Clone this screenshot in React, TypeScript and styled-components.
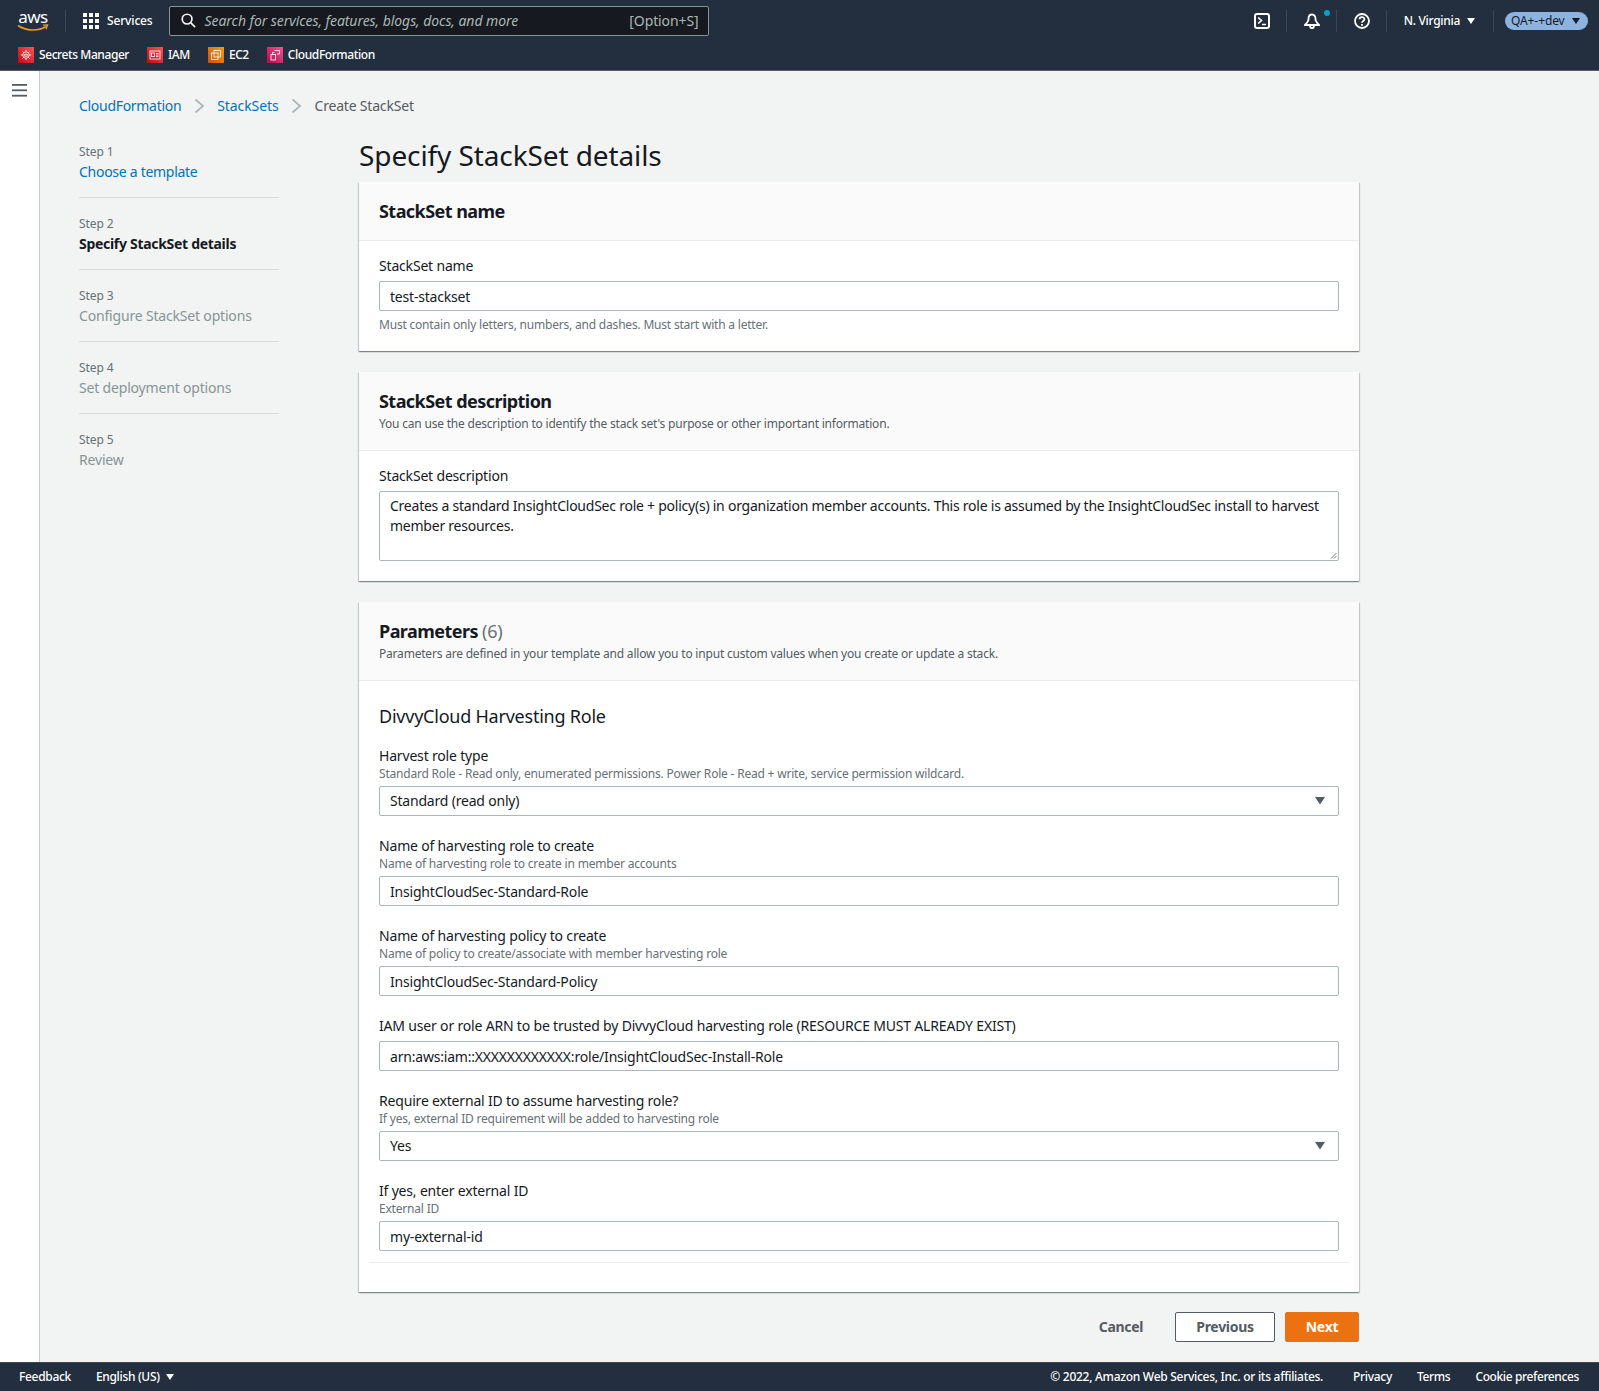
import React from "react";
import styled, { createGlobalStyle } from "styled-components";

const Global = createGlobalStyle`
  html, body { margin: 0; padding: 0; background: #f2f3f3; }
  * { box-sizing: border-box; }
  body { font-family: "Noto Sans", "Open Sans", Arial, sans-serif; color: #16191f; font-size: 14px; line-height: 20px; }
`;

const Page = styled.div`
  width: 1599px; height: 1391px; display: flex; flex-direction: column; overflow: hidden;
`;
const Nav = styled.header`
  height: 71px; background: #232f3e; border-bottom: 1px solid #545b64; flex: none; color: #fff;
`;
const TopRow = styled.div`
  height: 41px; display: flex; align-items: center; padding-left: 17px;
`;
const Logo = styled.div`
  width: 32px; height: 24px; position: relative; flex: none; color: #fff; font-size: 17px; line-height: 17px; font-weight: 400; letter-spacing: -0.5px; text-align: center; margin-top: -1px; margin-right: 16px;
  svg { position: absolute; left: 0; top: 16px; }
`;
const NavSep = styled.span`
  width: 1px; height: 22px; background: #414750; flex: none;
`;
const ServicesBtn = styled.div`
  display: flex; align-items: center; gap: 8px; margin-left: 17px; font-size: 12px; font-weight: 500; letter-spacing: -0.15px;
  margin-right: 16px;
`;
const SearchBox = styled.div`
  width: 540px; height: 30px; background: #16191f; border: 1px solid #879596; border-radius: 2px; display: flex; align-items: center; padding: 0 9px 0 11px; color: #aab7b8; font-size: 14px; flex: none;
`;
const SearchText = styled.span`
  font-style: italic; margin-left: 9px; flex: 1; letter-spacing: -0.06px;
`;
const Shortcut = styled.span`
  letter-spacing: -0.1px;
`;
const Utilities = styled.div`
  margin-left: auto; display: flex; align-items: center; padding-right: 11px;
`;
const IconCell = styled.span<{ $ml: number; $mr: number }>`
  position: relative; display: flex; margin: 0 ${(p) => p.$mr}px 0 ${(p) => p.$ml}px; width: 16px; height: 16px;
`;
const Dot = styled.span`
  position: absolute; width: 6px; height: 6px; border-radius: 50%; background: #00a1c9; left: 20px; top: -3px;
`;
const Region = styled.span`
  display: flex; align-items: center; gap: 7px; margin: 0 18px 0 17px; font-size: 12px; font-weight: 500; letter-spacing: -0.3px;
`;
const Pill = styled.span`
  display: flex; align-items: center; justify-content: space-between; width: 83px; height: 18px; margin-left: 11px; padding: 0 8px 0 6px; border-radius: 9px; background: #8db4e0; color: #16191f; font-size: 12px; letter-spacing: -0.1px;
`;
const FavRow = styled.div`
  height: 29px; display: flex; align-items: center; padding-left: 18px; gap: 18px; margin-top: -1px;
`;
const Fav = styled.span`
  display: flex; align-items: center; gap: 5px; font-size: 12px; font-weight: 500; letter-spacing: -0.42px;
`;
const FavIcon = styled.span<{ $from: string; $to: string }>`
  width: 16px; height: 16px; display: flex; align-items: center; justify-content: center; background: linear-gradient(45deg, ${(p) => p.$from}, ${(p) => p.$to}); flex: none;
`;
const Middle = styled.div`
  flex: 1; display: flex; min-height: 0;
`;
const Rail = styled.aside`
  width: 40px; background: #fff; border-right: 1px solid #c6cccd; flex: none; padding: 11px 0 0 12px; color: #545b64;
`;
const Content = styled.main`
  flex: 1; padding: 25px 0 0 39px; min-width: 0;
`;
const Crumbs = styled.nav`
  display: flex; align-items: center; height: 20px;
`;
const CrumbSep = styled.span<{ $mr: number }>`
  display: flex; margin: 0 ${(p) => p.$mr}px 0 12px;
`;
const Link = styled.a<{ $ls: number }>`
  color: #0073bb; text-decoration: none; letter-spacing: ${(p) => p.$ls}px;
`;
const Current = styled.span`
  color: #545b64; letter-spacing: -0.19px;
`;
const Columns = styled.div`
  display: grid; grid-template-columns: 200px 1000px; column-gap: 80px; margin-top: 22px;
`;
const Steps = styled.ol`
  list-style: none; margin: 0; padding: 6px 0 0;
`;
const StepItem = styled.li`
  padding: 0 0 15px; margin-bottom: 18px; border-bottom: 1px solid #d5dbdb;
  &:last-child { border-bottom: 0; }
`;
const StepNo = styled.div`
  font-size: 12px; line-height: 16px; color: #687078; margin-bottom: 2px; letter-spacing: -0.1px;
`;
const stepSpacing = { link: "-0.28px", active: "-0.3px", off: "-0.18px" };
const stepColor = { link: "#0073bb", active: "#16191f", off: "#879596" };
const StepTitle = styled.div<{ $state: "link" | "active" | "off" }>`
  letter-spacing: ${(p) => stepSpacing[p.$state]};
  color: ${(p) => stepColor[p.$state]};
  font-weight: ${(p) => (p.$state === "active" ? 700 : 400)};
`;
const MainCol = styled.div`
  display: flex; flex-direction: column;
`;
const PageTitle = styled.h1`
  margin: -1px 0 9px; font-size: 28px; line-height: 36px; font-weight: 400; letter-spacing: -0.1px;
`;
const Card = styled.section`
  background: #fff; margin-bottom: 21px;
  box-shadow: 0 1px 1px 0 rgba(0,28,36,.3), 1px 1px 1px 0 rgba(0,28,36,.15), -1px 1px 1px 0 rgba(0,28,36,.15);
  &:last-of-type { margin-bottom: 20px; }
`;
const CardHead = styled.div`
  background: #fafafa; border-bottom: 1px solid #eaeded; padding: 18px 20px;
`;
const CardTitle = styled.h2`
  margin: 0; font-size: 18px; line-height: 22px; font-weight: 700; letter-spacing: -0.55px;
`;
const Count = styled.span`
  font-weight: 400; color: #687078; letter-spacing: -0.2px;
`;
const CardDesc = styled.p`
  margin: 4px 0 0; font-size: 12px; line-height: 16px; color: #545b64; letter-spacing: -0.2px;
`;
const CardBody = styled.div`
  padding: 15px 20px 20px;
`;
const ParamBody = styled.div`
  padding: 23px 20px 29px;
`;
const Section = styled.h3`
  margin: 0 0 18px; font-size: 18px; line-height: 24px; font-weight: 400; letter-spacing: -0.23px;
`;
const Field = styled.div`
  margin-bottom: 20px;
  &:last-of-type { margin-bottom: 11px; }
`;
const Label = styled.div`
  line-height: 20px; letter-spacing: -0.18px; margin-bottom: 5px;
`;
const LabelWithDesc = styled(Label)`
  margin-bottom: 0;
`;
const Desc = styled.div`
  font-size: 12px; line-height: 16px; color: #687078; margin-bottom: 4px; letter-spacing: -0.2px;
`;
const Hint = styled.div`
  font-size: 12px; line-height: 16px; color: #687078; margin: 6px 0 -2px; letter-spacing: -0.2px;
`;
const Control = styled.div<{ $select?: boolean }>`
  height: 30px; border: 1px solid #aab7b8; border-radius: 2px; background: #fff; padding: ${(p) => (p.$select ? "0" : "2px")} 13px 0 10px; line-height: 20px; display: flex; align-items: center; justify-content: space-between; letter-spacing: -0.2px;
`;
const Area = styled.div`
  position: relative; height: 70px; border: 1px solid #aab7b8; border-radius: 2px; padding: 4px 10px; line-height: 20px; letter-spacing: -0.24px;
  svg { position: absolute; right: 1px; bottom: 1px; }
`;
const Rule = styled.hr`
  border: 0; border-top: 1px solid #eaeded; margin: 0 -10px;
`;
const Actions = styled.div`
  display: flex; justify-content: flex-end; align-items: center;
`;
const Cancel = styled.span`
  font-weight: 700; color: #545b64; margin-right: 32px; letter-spacing: -0.35px;
`;
const Button = styled.span<{ $primary?: boolean }>`
  height: 30px; display: flex; align-items: center; justify-content: center; border-radius: 2px; font-weight: 700; letter-spacing: -0.3px;
  width: ${(p) => (p.$primary ? "74px" : "100px")};
  margin-left: ${(p) => (p.$primary ? "10px" : "0")};
  background: ${(p) => (p.$primary ? "#ec7211" : "#fff")};
  color: ${(p) => (p.$primary ? "#fff" : "#545b64")};
  border: 1px solid ${(p) => (p.$primary ? "#ec7211" : "#545b64")};
`;
const Footer = styled.footer`
  height: 29px; background: #232f3e; color: #fff; flex: none; display: flex; align-items: center; padding: 0 20px 0 19px; font-size: 12px; font-weight: 500; letter-spacing: -0.32px; border-top: 1px solid #414750;
`;
const FootLang = styled.span`
  display: flex; align-items: center; gap: 6px; margin-left: 25px;
`;
const FootRight = styled.div`
  margin-left: auto; display: flex; gap: 25px;
`;
const Copyright = styled.span`
  margin-right: 5px; letter-spacing: -0.28px;
`;
const CookieLink = styled.span`
  letter-spacing: -0.38px;
`;

const Caret = ({ size = 8, color = "#fff" }: { size?: number; color?: string }) => (
  <svg width={size} height={size * 0.75} viewBox="0 0 8 6"><path d="M0 0h8L4 6z" fill={color} /></svg>
);
const Chevron = () => (
  <svg width="13" height="16" viewBox="0 0 13 16" fill="none"><path d="M2.5 1.5 L10 8 L2.5 14.5" stroke="#aab7b8" strokeWidth="1.8" /></svg>
);
const SelectCaret = () => <Caret size={10} color="#545b64" />;

const GridIcon = () => (
  <svg width="16" height="16" viewBox="0 0 16 16" fill="#fff">
    {[0, 6, 12].flatMap((y) => [0, 6, 12].map((x) => <rect key={`${x}-${y}`} x={x} y={y} width="4" height="4" />))}
  </svg>
);
const SearchIcon = () => (
  <svg width="15" height="15" viewBox="0 0 16 16" fill="none" stroke="#f2f3f3" strokeWidth="1.8"><circle cx="6.5" cy="6.5" r="5.2" /><path d="M10.3 10.3 L15 15" /></svg>
);
const TerminalIcon = () => (
  <svg width="16" height="16" viewBox="0 0 16 16" fill="none" stroke="#fff" strokeWidth="2"><rect x="1" y="1" width="14" height="14" rx="2" /><path d="M4.2 4.5 L7.4 7.5 L4.2 10.5 M8 11.5 H12" strokeWidth="1.7" /></svg>
);
const BellIcon = () => (
  <svg width="16" height="16" viewBox="0 0 16 16" fill="none" stroke="#fff" strokeWidth="1.8"><path d="M8 1.5 C5.5 1.5 4.5 3.5 4.5 6 C4.5 8.5 3 10 1 12 H15 C13 10 11.5 8.5 11.5 6 C11.5 3.5 10.5 1.5 8 1.5 Z" /><path d="M6 12.5 C6 16 10 16 10 12.5" /></svg>
);
const HelpIcon = () => (
  <svg width="16" height="16" viewBox="0 0 16 16" fill="none" stroke="#fff" strokeWidth="1.8"><circle cx="8" cy="8" r="7" /><path d="M5.6 6.2 C5.6 3.4 10.4 3.4 10.4 6.2 C10.4 8 8 7.8 8 9.8" /><path d="M8 11 V12.8" /></svg>
);
const MenuIcon = () => (
  <svg width="15" height="13" viewBox="0 0 15 13" fill="#545b64"><rect width="15" height="1.8" y="0" /><rect width="15" height="1.8" y="5.4" /><rect width="15" height="1.8" y="10.8" /></svg>
);
const Grip = () => (
  <svg width="7" height="7" viewBox="0 0 7 7" stroke="#545b64" strokeWidth="0.8"><path d="M1 6.5 L6.5 1 M4 6.5 L6.5 4" /></svg>
);
const GlyphSecrets = () => (
  <svg width="12" height="12" viewBox="0 0 12 12" fill="none" stroke="#fff" strokeWidth="0.8"><circle cx="6" cy="6" r="3.2" /><rect x="4.8" y="5.2" width="2.4" height="2" /><path d="M6 0.8V2.8M6 9.2V11.2M0.8 6H2.8M9.2 6H11.2M2.3 2.3L3.7 3.7M8.3 8.3L9.7 9.7M9.7 2.3L8.3 3.7M3.7 8.3L2.3 9.7" /></svg>
);
const GlyphIam = () => (
  <svg width="12" height="12" viewBox="0 0 12 12" fill="none" stroke="#fff" strokeWidth="0.8"><rect x="1" y="2" width="10" height="8" /><rect x="2.5" y="4" width="3" height="3.6" /><path d="M7 4.5H9.5M7 6H9.5M7 7.5H9.5" /></svg>
);
const GlyphEc2 = () => (
  <svg width="12" height="12" viewBox="0 0 12 12" fill="none" stroke="#fff" strokeWidth="0.8"><rect x="4" y="1.5" width="6.5" height="6.5" /><rect x="1.5" y="4" width="6.5" height="6.5" /></svg>
);
const GlyphCf = () => (
  <svg width="12" height="12" viewBox="0 0 12 12" fill="none" stroke="#fff" strokeWidth="0.8"><rect x="2" y="5.5" width="4.5" height="5.5" /><path d="M5.5 1.5H10.5V5H8M3.5 5.5V3.5H5.5" /></svg>
);

const steps: { no: string; title: string; state: "link" | "active" | "off" }[] = [
  { no: "Step 1", title: "Choose a template", state: "link" },
  { no: "Step 2", title: "Specify StackSet details", state: "active" },
  { no: "Step 3", title: "Configure StackSet options", state: "off" },
  { no: "Step 4", title: "Set deployment options", state: "off" },
  { no: "Step 5", title: "Review", state: "off" },
];

const params: { label: string; desc?: string; value: string; select?: boolean }[] = [
  { label: "Harvest role type", desc: "Standard Role - Read only, enumerated permissions. Power Role - Read + write, service permission wildcard.", value: "Standard (read only)", select: true },
  { label: "Name of harvesting role to create", desc: "Name of harvesting role to create in member accounts", value: "InsightCloudSec-Standard-Role" },
  { label: "Name of harvesting policy to create", desc: "Name of policy to create/associate with member harvesting role", value: "InsightCloudSec-Standard-Policy" },
  { label: "IAM user or role ARN to be trusted by DivvyCloud harvesting role (RESOURCE MUST ALREADY EXIST)", value: "arn:aws:iam::XXXXXXXXXXXX:role/InsightCloudSec-Install-Role" },
  { label: "Require external ID to assume harvesting role?", desc: "If yes, external ID requirement will be added to harvesting role", value: "Yes", select: true },
  { label: "If yes, enter external ID", desc: "External ID", value: "my-external-id" },
];

export default function App() {
  return (
    <Page>
      <Global />
      <Nav>
        <TopRow>
          <Logo>
            aws
            <svg width="32" height="8" viewBox="0 0 32 8" fill="none"><path d="M1 1.5 C9 7 21 7.5 29 2.5" stroke="#ec9c1f" strokeWidth="1.6" /><path d="M26 1.2 L30.6 1 L29 5.2" stroke="#ec9c1f" strokeWidth="1.3" /></svg>
          </Logo>
          <NavSep />
          <ServicesBtn><GridIcon />Services</ServicesBtn>
          <SearchBox>
            <SearchIcon />
            <SearchText>Search for services, features, blogs, docs, and more</SearchText>
            <Shortcut>[Option+S]</Shortcut>
          </SearchBox>
          <Utilities>
            <IconCell $ml={0} $mr={16}><TerminalIcon /></IconCell>
            <NavSep />
            <IconCell $ml={17} $mr={16}><BellIcon /><Dot /></IconCell>
            <NavSep />
            <IconCell $ml={17} $mr={16}><HelpIcon /></IconCell>
            <NavSep />
            <Region>N. Virginia <Caret /></Region>
            <NavSep />
            <Pill>QA+-+dev <Caret color="#16191f" /></Pill>
          </Utilities>
        </TopRow>
        <FavRow>
          <Fav><FavIcon $from="#bd0816" $to="#ff5252"><GlyphSecrets /></FavIcon>Secrets Manager</Fav>
          <Fav><FavIcon $from="#bd0816" $to="#ff5252"><GlyphIam /></FavIcon>IAM</Fav>
          <Fav><FavIcon $from="#c8511b" $to="#ff9900"><GlyphEc2 /></FavIcon>EC2</Fav>
          <Fav><FavIcon $from="#b0084d" $to="#ff4f8b"><GlyphCf /></FavIcon>CloudFormation</Fav>
        </FavRow>
      </Nav>
      <Middle>
        <Rail><MenuIcon /></Rail>
        <Content>
          <Crumbs>
            <Link $ls={-0.3}>CloudFormation</Link>
            <CrumbSep $mr={11}><Chevron /></CrumbSep>
            <Link $ls={-0.1}>StackSets</Link>
            <CrumbSep $mr={11}><Chevron /></CrumbSep>
            <Current>Create StackSet</Current>
          </Crumbs>
          <Columns>
            <Steps>
              {steps.map((s) => (
                <StepItem key={s.no}>
                  <StepNo>{s.no}</StepNo>
                  <StepTitle $state={s.state}>{s.title}</StepTitle>
                </StepItem>
              ))}
            </Steps>
            <MainCol>
              <PageTitle>Specify StackSet details</PageTitle>
              <Card>
                <CardHead><CardTitle>StackSet name</CardTitle></CardHead>
                <CardBody>
                  <Label>StackSet name</Label>
                  <Control>test-stackset</Control>
                  <Hint>Must contain only letters, numbers, and dashes. Must start with a letter.</Hint>
                </CardBody>
              </Card>
              <Card>
                <CardHead>
                  <CardTitle>StackSet description</CardTitle>
                  <CardDesc>You can use the description to identify the stack set's purpose or other important information.</CardDesc>
                </CardHead>
                <CardBody>
                  <Label>StackSet description</Label>
                  <Area>
                    Creates a standard InsightCloudSec role + policy(s) in organization member accounts. This role is assumed by the InsightCloudSec install to harvest member resources.
                    <Grip />
                  </Area>
                </CardBody>
              </Card>
              <Card>
                <CardHead>
                  <CardTitle>Parameters <Count>(6)</Count></CardTitle>
                  <CardDesc>Parameters are defined in your template and allow you to input custom values when you create or update a stack.</CardDesc>
                </CardHead>
                <ParamBody>
                  <Section>DivvyCloud Harvesting Role</Section>
                  {params.map((f) => (
                    <Field key={f.label}>
                      {f.desc ? <LabelWithDesc>{f.label}</LabelWithDesc> : <Label>{f.label}</Label>}
                      {f.desc && <Desc>{f.desc}</Desc>}
                      <Control $select={f.select}>{f.value}{f.select && <SelectCaret />}</Control>
                    </Field>
                  ))}
                  <Rule />
                </ParamBody>
              </Card>
              <Actions>
                <Cancel>Cancel</Cancel>
                <Button>Previous</Button>
                <Button $primary>Next</Button>
              </Actions>
            </MainCol>
          </Columns>
        </Content>
      </Middle>
      <Footer>
        <span>Feedback</span>
        <FootLang>English (US) <Caret /></FootLang>
        <FootRight>
          <Copyright>© 2022, Amazon Web Services, Inc. or its affiliates.</Copyright>
          <span>Privacy</span>
          <span>Terms</span>
          <CookieLink>Cookie preferences</CookieLink>
        </FootRight>
      </Footer>
    </Page>
  );
}
